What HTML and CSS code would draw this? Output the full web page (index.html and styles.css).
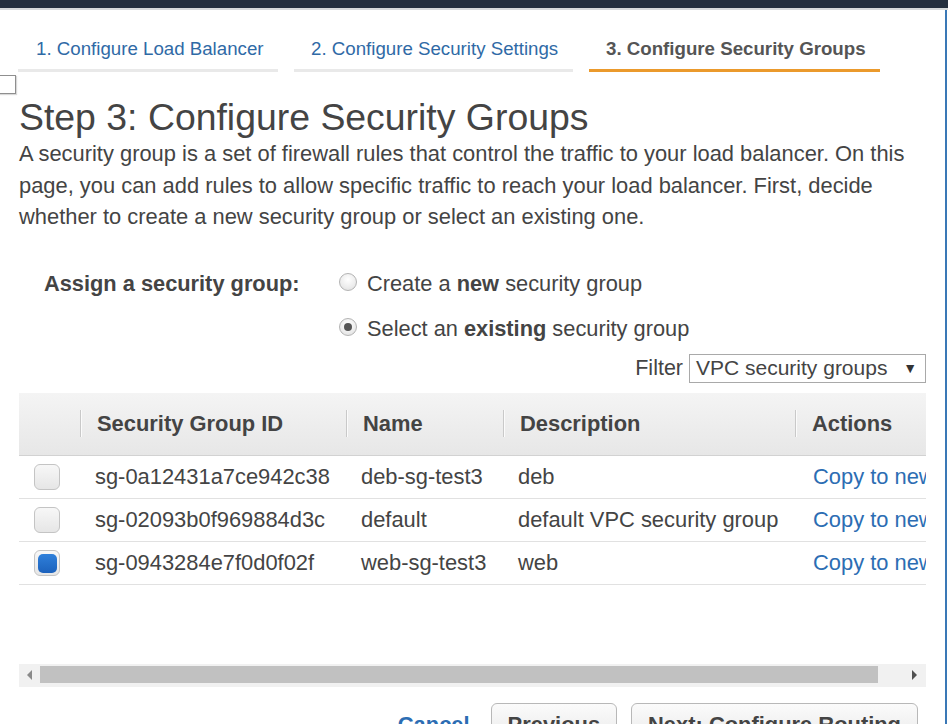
FILE: index.html
```html
<!DOCTYPE html>
<html lang="en">
<head>
<meta charset="utf-8">
<title>Configure Security Groups</title>
<link rel="stylesheet" href="styles.css">
</head>
<body>
<div class="topbar"></div>
<div class="page">
  <div class="corner"></div>
  <nav class="tabs">
    <div class="tab tab1">1. Configure Load Balancer</div>
    <div class="tab tab2">2. Configure Security Settings</div>
    <div class="tab tab3 active">3. Configure Security Groups</div>
  </nav>
  <h1 class="title">Step 3: Configure Security Groups</h1>
  <p class="intro">A security group is a set of firewall rules that control the traffic to your load balancer. On this page, you can add rules to allow specific traffic to reach your load balancer. First, decide whether to create a new security group or select an existing one.</p>

  <div class="assign">
    <div class="assign-label">Assign a security group:</div>
    <div class="radios">
      <div class="radio-row"><span class="radio"></span><span>Create a <b>new</b> security group</span></div>
      <div class="radio-row"><span class="radio checked"></span><span>Select an <b>existing</b> security group</span></div>
    </div>
  </div>

  <div class="filter">
    <span>Filter</span>
    <div class="select"><span>VPC security groups</span><span class="caret">&#9660;</span></div>
  </div>

  <div class="grid-wrap">
    <table class="grid">
      <colgroup>
        <col class="c-check"><col class="c-id"><col class="c-name"><col class="c-desc"><col class="c-act">
      </colgroup>
      <thead>
        <tr>
          <th class="th-check"></th>
          <th>Security Group ID</th>
          <th>Name</th>
          <th>Description</th>
          <th>Actions</th>
        </tr>
      </thead>
      <tbody>
        <tr>
          <td class="td-check"><span class="cb"></span></td>
          <td>sg-0a12431a7ce942c38</td>
          <td>deb-sg-test3</td>
          <td>deb</td>
          <td class="td-act"><a class="link">Copy to new</a></td>
        </tr>
        <tr>
          <td class="td-check"><span class="cb"></span></td>
          <td>sg-02093b0f969884d3c</td>
          <td>default</td>
          <td>default VPC security group</td>
          <td class="td-act"><a class="link">Copy to new</a></td>
        </tr>
        <tr>
          <td class="td-check"><span class="cb checked"></span></td>
          <td>sg-0943284e7f0d0f02f</td>
          <td>web-sg-test3</td>
          <td>web</td>
          <td class="td-act"><a class="link">Copy to new</a></td>
        </tr>
      </tbody>
    </table>
  </div>

  <div class="hscroll">
    <div class="arrow-box left"><span class="arrow-l"></span></div>
    <div class="thumb"></div>
    <div class="arrow-box right"><span class="arrow-r"></span></div>
  </div>

  <div class="footer">
    <a class="cancel">Cancel</a>
    <button class="btn">Previous</button>
    <button class="btn">Next: Configure Routing</button>
  </div>
</div>
</body>
</html>
```

FILE: styles.css
```css
html, body {
  margin: 0;
  padding: 0;
  background: #fff;
  overflow: hidden;
}
body {
  width: 948px;
  height: 724px;
  font-family: "Liberation Sans", Arial, sans-serif;
  color: #444;
}
.topbar {
  height: 8px;
  background: #232f3e;
  border-bottom: 2px solid #d5d9da;
}
.page {
  position: relative;
  margin-right: 1px;
  border-right: 2px solid #3a78b6;
  min-height: 714px;
  padding: 0 19px;
}
.corner {
  position: absolute;
  left: -2px;
  top: 65px;
  width: 16px;
  height: 17px;
  border: 1px solid #8f8f8f;
  background: #fff;
  box-shadow: 1px 1px 1px rgba(0,0,0,0.15);
}
.tabs {
  display: flex;
  gap: 16px;
  margin-left: -1px;
  padding-top: 28px;
}
.tab {
  box-sizing: border-box;
  padding: 0 0 9px 17px;
  border-bottom: 3px solid #e9e9e9;
  font-size: 18.7px;
  line-height: 22px;
  color: #2f6aa6;
  white-space: nowrap;
}
.tab1 { width: 260px; padding-left: 18px; }
.tab2 { width: 279px; }
.tab3 { width: 291px; }
.tab.active {
  color: #555;
  font-weight: bold;
  border-bottom-color: #eb9a2c;
}
.title {
  margin: 24px 0 0;
  font-size: 37.4px;
  line-height: 42px;
  font-weight: 400;
  color: #444;
}
.intro {
  margin: 0;
  font-size: 21.9px;
  line-height: 31.5px;
}
.assign {
  display: flex;
  margin-top: 36px;
  padding-left: 25px;
  font-size: 21.8px;
}
.assign-label {
  width: 295px;
  font-weight: bold;
  line-height: 30px;
}
.radios {
  display: flex;
  flex-direction: column;
  gap: 15px;
}
.radio-row {
  display: flex;
  align-items: center;
  gap: 10px;
  line-height: 30px;
}
.radio {
  position: relative;
  box-sizing: border-box;
  width: 18px;
  height: 18px;
  margin-bottom: 4px;
  border-radius: 50%;
  border: 1px solid #b3b3b3;
  background: radial-gradient(circle at 50% 35%, #ffffff 0%, #ececec 60%, #dcdcdc 100%);
}
.radio.checked::after {
  content: "";
  position: absolute;
  left: 4px;
  top: 4px;
  width: 8px;
  height: 8px;
  border-radius: 50%;
  background: #555;
}
.filter {
  display: flex;
  justify-content: flex-end;
  align-items: center;
  gap: 6px;
  margin-top: 10px;
  font-size: 21.5px;
}
.select {
  box-sizing: border-box;
  width: 237px;
  height: 29px;
  border: 1px solid #a9a9a9;
  padding: 0 8px 0 6px;
  display: flex;
  justify-content: space-between;
  align-items: center;
  font-size: 21px;
  color: #444;
}
.caret {
  font-size: 14px;
  color: #333;
}
.grid-wrap {
  margin-top: 10px;
  height: 271px;
  overflow: hidden;
}
.grid {
  border-collapse: collapse;
  table-layout: fixed;
  width: 1100px;
  font-size: 21.9px;
}
.c-check { width: 61px; }
.c-id { width: 266px; }
.c-name { width: 157px; }
.c-desc { width: 292px; }
.c-act { width: 324px; }
.grid th {
  position: relative;
  height: 62px;
  padding: 0 0 0 17px;
  text-align: left;
  font-weight: bold;
  color: #444;
  background: linear-gradient(#f4f4f4, #e7e7e7);
  border-bottom: 1px solid #d2d2d2;
  white-space: nowrap;
}
.grid th + th::before {
  content: "";
  position: absolute;
  left: 0;
  top: 17px;
  width: 1px;
  height: 27px;
  background: #c9c9c9;
  box-shadow: 1px 0 0 #fbfbfb;
}
.grid td {
  height: 42px;
  padding: 0 0 0 15px;
  border-bottom: 1px solid #e1e1e1;
  white-space: nowrap;
  color: #444;
}
.grid .td-check {
  padding-left: 15px;
}
.grid .td-act {
  padding-left: 18px;
}
.cb {
  display: block;
  position: relative;
  box-sizing: border-box;
  width: 26px;
  height: 26px;
  border: 1px solid #c4c4c4;
  border-radius: 6px;
  background: linear-gradient(#f7f7f7, #e6e6e6);
}
.cb.checked::after {
  content: "";
  position: absolute;
  left: 3px;
  top: 3px;
  right: 2px;
  bottom: 2px;
  border-radius: 5px;
  background: linear-gradient(#2f80da, #1c62bd);
}
.link {
  color: #2c6db3;
  text-decoration: none;
}
.hscroll {
  display: flex;
  height: 23px;
  background: #f1f1f1;
}
.arrow-box {
  display: flex;
  align-items: center;
}
.arrow-box.left {
  width: 21px;
  justify-content: center;
}
.arrow-box.right {
  flex: 1;
  justify-content: flex-end;
  padding-right: 9px;
}
.arrow-l {
  width: 0;
  height: 0;
  border-top: 5px solid transparent;
  border-bottom: 5px solid transparent;
  border-right: 5px solid #8a8a8a;
}
.arrow-r {
  width: 0;
  height: 0;
  border-top: 5px solid transparent;
  border-bottom: 5px solid transparent;
  border-left: 5px solid #505050;
}
.thumb {
  width: 838px;
  height: 17px;
  margin-top: 2px;
  background: #c1c1c1;
}
.footer {
  display: flex;
  justify-content: flex-end;
  align-items: center;
  gap: 14px;
  margin-top: 16px;
  padding-right: 8px;
}
.cancel {
  margin-right: 7px;
  font-size: 21.9px;
  font-weight: bold;
  color: #2c6db3;
}
.btn {
  height: 44px;
  padding: 0 16px;
  border: 1px solid #b8b8b8;
  border-radius: 6px;
  background: linear-gradient(#fbfbfb, #e7e7e7);
  font-family: "Liberation Sans", Arial, sans-serif;
  font-size: 21.9px;
  font-weight: bold;
  color: #444;
}
```
